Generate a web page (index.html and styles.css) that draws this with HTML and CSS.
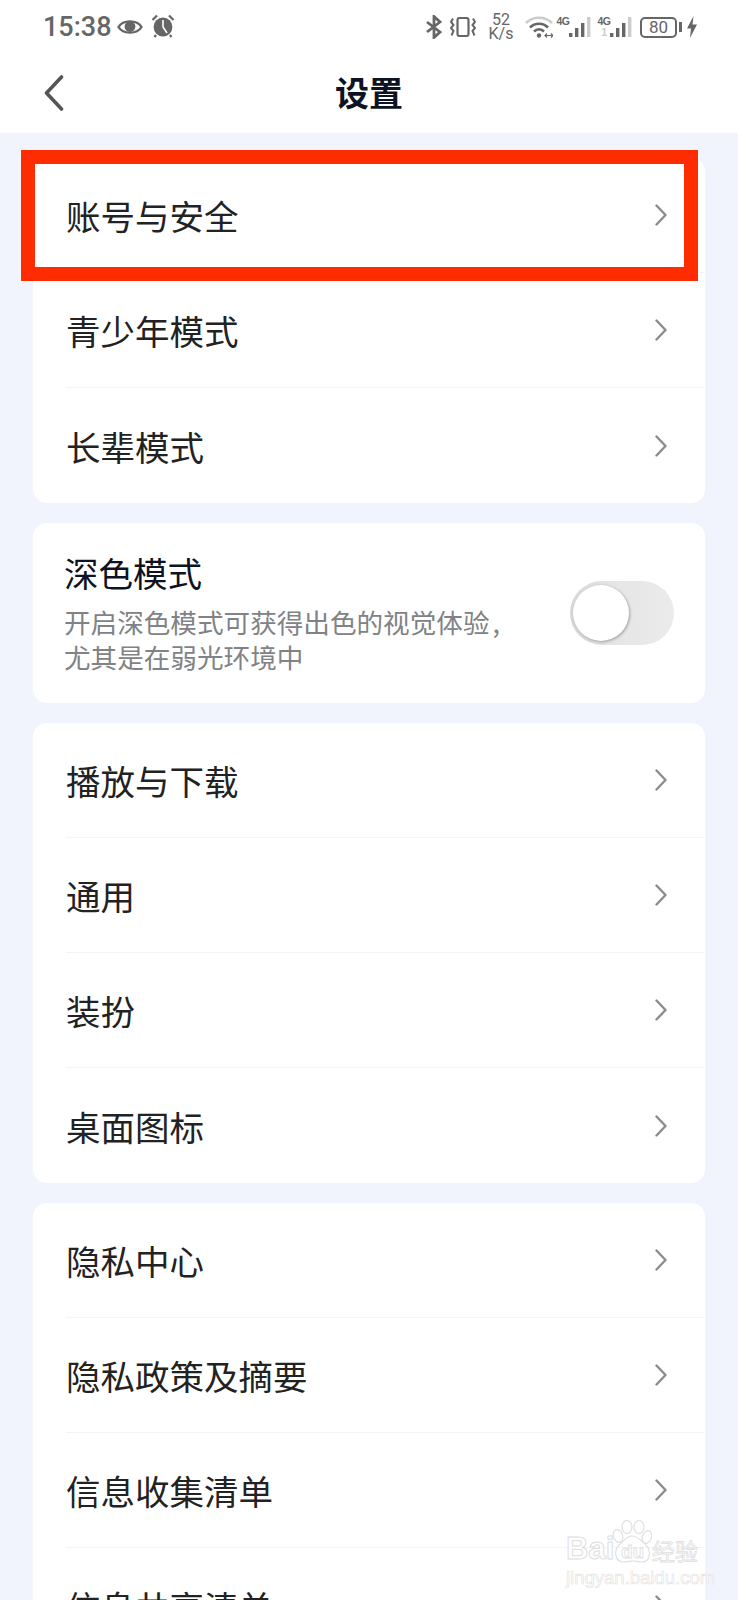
FILE: index.html
```html
<!DOCTYPE html>
<html lang="zh-CN">
<head>
    <meta charset="UTF-8">
    <meta name="viewport" content="width=device-width, initial-scale=1.0">
    <title>设置</title>
    <link rel="stylesheet" href="styles.css">
</head>
<body>
    <svg class="defs" width="0" height="0">
        <symbol id="chevron" viewBox="0 0 12 22">
            <path d="M1.5 1.5 L10.5 11 L1.5 20.5" fill="none" stroke="#8c8c8c" stroke-width="2.4" stroke-linecap="round" stroke-linejoin="round"/>
        </symbol>
        <symbol id="signal" viewBox="0 0 22 22">
            <rect x="0" y="17" width="3.4" height="4" fill="#666"/>
            <rect x="6" y="12" width="3.4" height="9" fill="#666"/>
            <rect x="12" y="7" width="3.4" height="14" fill="#666"/>
            <rect x="18" y="1" width="3.4" height="20" fill="#ccc"/>
        </symbol>
    </svg>

    <div class="status-bar">
        <span class="clock">15:38</span>
        <svg class="icon-eye" viewBox="0 0 26 18">
            <path d="M1.5 9 C6 1.5 20 1.5 24.5 9 C20 16.5 6 16.5 1.5 9 Z" fill="none" stroke="#666" stroke-width="2.4"/>
            <circle cx="13" cy="8.5" r="5.4" fill="#666"/>
        </svg>
        <svg class="icon-alarm" viewBox="0 0 24 24">
            <circle cx="12" cy="13" r="9.4" fill="#666"/>
            <path d="M12 6 V13 L16 19" fill="none" stroke="#fff" stroke-width="1.6"/>
            <path d="M1.5 6 L6 1.5 M22.5 6 L18 1.5 M5 21 L3.5 23 M19 21 L20.5 23" stroke="#666" stroke-width="2.2"/>
        </svg>
        <div class="status-right">
            <svg class="icon-bt" viewBox="0 0 17 24">
                <path d="M1 7 L14 17 L8 22.5 V1.5 L14 7 L1 17" fill="none" stroke="#666" stroke-width="2.8"/>
            </svg>
            <svg class="icon-vibrate" viewBox="0 0 26 20">
                <rect x="7.5" y="1" width="11" height="18" rx="2" fill="none" stroke="#666" stroke-width="2.2"/>
                <path d="M3 1.5 L1 5 L3.5 8 L1 11 L3.5 14 L1.5 18.5 M23 1.5 L25 5 L22.5 8 L25 11 L22.5 14 L24.5 18.5" fill="none" stroke="#666" stroke-width="2"/>
            </svg>
            <div class="speed"><span>52</span><span>K/s</span></div>
            <svg class="icon-wifi" viewBox="0 0 28 22">
                <path d="M1 7 C8 0 20 0 27 7" fill="none" stroke="#ccc" stroke-width="2.6"/>
                <path d="M5 11.5 C10 6.5 18 6.5 23 11.5" fill="none" stroke="#666" stroke-width="2.6"/>
                <path d="M9 15.5 C12 12.5 16 12.5 19 15.5" fill="none" stroke="#666" stroke-width="2.6"/>
                <circle cx="14" cy="19.5" r="2.2" fill="#666"/>
                <path d="M20 19.5 H28 M22 17.5 L20 19.5 L22 21.5 M26 17.5 L28 19.5 L26 21.5" fill="none" stroke="#666" stroke-width="1.2"/>
            </svg>
            <div class="net">
                <div class="net-label"><span>4G</span></div>
                <svg class="icon-signal"><use href="#signal"/></svg>
            </div>
            <div class="net">
                <div class="net-label"><span>4G</span><span class="net-sub">1</span></div>
                <svg class="icon-signal"><use href="#signal"/></svg>
            </div>
            <div class="battery"><span>80</span></div>
            <span class="battery-nub"></span>
            <svg class="icon-bolt" viewBox="0 0 10 22">
                <path d="M6.5 0 L0 12.5 H4 L3 22 L10 8.5 H5.5 Z" fill="#666"/>
            </svg>
        </div>
    </div>

    <header class="nav-bar">
        <svg class="back" viewBox="0 0 20 36">
            <path d="M17.5 2 L2.5 18 L17.5 34" fill="none" stroke="#555" stroke-width="3.6" stroke-linecap="round" stroke-linejoin="round"/>
        </svg>
        <h1>设置</h1>
    </header>

    <main class="content">
        <section class="card">
            <div class="row"><span>账号与安全</span><svg class="chevron"><use href="#chevron"/></svg></div>
            <div class="row"><span>青少年模式</span><svg class="chevron"><use href="#chevron"/></svg></div>
            <div class="row"><span>长辈模式</span><svg class="chevron"><use href="#chevron"/></svg></div>
        </section>

        <section class="card dark-mode">
            <div class="dark-text">
                <h2>深色模式</h2>
                <p>开启深色模式可获得出色的视觉体验<span class="comma">,</span><br>尤其是在弱光环境中</p>
            </div>
            <div class="toggle"><span class="knob"></span></div>
        </section>

        <section class="card">
            <div class="row"><span>播放与下载</span><svg class="chevron"><use href="#chevron"/></svg></div>
            <div class="row"><span>通用</span><svg class="chevron"><use href="#chevron"/></svg></div>
            <div class="row"><span>装扮</span><svg class="chevron"><use href="#chevron"/></svg></div>
            <div class="row"><span>桌面图标</span><svg class="chevron"><use href="#chevron"/></svg></div>
        </section>

        <section class="card">
            <div class="row"><span>隐私中心</span><svg class="chevron"><use href="#chevron"/></svg></div>
            <div class="row"><span>隐私政策及摘要</span><svg class="chevron"><use href="#chevron"/></svg></div>
            <div class="row"><span>信息收集清单</span><svg class="chevron"><use href="#chevron"/></svg></div>
            <div class="row"><span>信息共享清单</span><svg class="chevron"><use href="#chevron"/></svg></div>
        </section>
    </main>

    <!-- annotation drawn on top of the screenshot -->
    <div class="highlight"></div>

    <div class="watermark">
        <div class="wm-line">
            <span class="wm-bai">Bai</span>
            <div class="wm-paw">
                <svg viewBox="0 0 40 44">
                    <g fill="none" stroke="#e0e0e0" stroke-width="1.2">
                        <ellipse cx="6" cy="16" rx="4.6" ry="6.5" transform="rotate(-20 6 16)"/>
                        <ellipse cx="15" cy="7" rx="5" ry="6.5"/>
                        <ellipse cx="27" cy="7" rx="5" ry="6.5"/>
                        <ellipse cx="35" cy="17" rx="4.6" ry="6.5" transform="rotate(20 35 17)"/>
                        <path d="M20 16 C14 16 12 21 7 25 C2 30 2 42 12 42 C16 42 18 41 21 41 C24 41 26 42 30 42 C39 42 39 30 34 25 C29 21 26 16 20 16 Z"/>
                    </g>
                </svg>
                <span class="wm-du">du</span>
            </div>
            <span class="wm-jy">经验</span>
        </div>
        <div class="wm-url">jingyan.baidu.com</div>
    </div>
</body>
</html>
```

FILE: styles.css
```css
html, body {
    margin: 0;
    padding: 0;
}

body {
    position: relative;
    width: 738px;
    height: 1600px;
    overflow: hidden;
    background: #f1f4fc;
    font-family: "Noto Sans CJK SC", "Noto Sans", sans-serif;
    color: #222;
}

.defs {
    position: absolute;
}

.status-bar {
    display: flex;
    align-items: center;
    height: 54px;
    padding: 0 41px 0 43px;
    background: #fff;
    color: #666;
}

.clock {
    font-family: Roboto, sans-serif;
    font-size: 27px;
    font-weight: 500;
}

.icon-eye {
    width: 26px;
    height: 18px;
    margin-left: 5px;
}

.icon-alarm {
    width: 24px;
    height: 24px;
    margin-left: 8px;
    margin-top: -2px;
}

.status-right {
    display: flex;
    align-items: center;
    margin-left: auto;
}

.icon-bt {
    width: 17px;
    height: 24px;
}

.icon-vibrate {
    width: 26px;
    height: 20px;
    margin-left: 7px;
}

.speed {
    display: flex;
    flex-direction: column;
    align-items: center;
    width: 26px;
    margin-left: 12px;
    font-family: Roboto, sans-serif;
    font-size: 16px;
    line-height: 14px;
}

.icon-wifi {
    width: 28px;
    height: 22px;
    margin-left: 11px;
}

.net {
    display: flex;
    align-items: flex-end;
    width: 34px;
    margin-left: 4px;
}

.net + .net {
    margin-left: 7px;
}

.net-label {
    display: flex;
    flex-direction: column;
    align-items: center;
    width: 12px;
    height: 22px;
    font-family: "Liberation Sans", sans-serif;
    font-size: 10.5px;
    font-weight: 700;
    line-height: 11px;
    letter-spacing: -0.5px;
}

.net-sub {
    color: #ccc;
}

.icon-signal {
    width: 22px;
    height: 22px;
}

.battery {
    box-sizing: border-box;
    display: flex;
    align-items: center;
    justify-content: center;
    width: 37px;
    height: 21px;
    margin-left: 8px;
    border: 2px solid #666;
    border-radius: 5px;
    font-family: Roboto, sans-serif;
    font-size: 17px;
}

.battery-nub {
    width: 3px;
    height: 10px;
    margin-left: 2px;
    background: #666;
}

.icon-bolt {
    width: 10px;
    height: 22px;
    margin-left: 5px;
}

.nav-bar {
    position: relative;
    display: flex;
    align-items: center;
    justify-content: center;
    box-sizing: border-box;
    height: 79px;
    padding-bottom: 4px;
    background: #fff;
}

.nav-bar h1 {
    margin: 0;
    font-size: 34px;
    font-weight: 700;
    color: #0d1322;
}

.back {
    position: absolute;
    left: 44px;
    top: 21px;
    width: 20px;
    height: 36px;
}

.content {
    display: flex;
    flex-direction: column;
    gap: 20px;
    padding: 25px 33px 0;
}

.card {
    flex: none;
    background: #fff;
    border-radius: 14px;
}

.row {
    box-sizing: border-box;
    display: flex;
    align-items: center;
    justify-content: space-between;
    height: 115px;
    margin-left: 33px;
    padding-right: 38px;
    border-bottom: 1px solid #f4f4f6;
    font-size: 34.5px;
}

.row:last-child {
    border-bottom: none;
}

.chevron {
    width: 12px;
    height: 22px;
}

.dark-mode {
    display: flex;
    align-items: center;
    justify-content: space-between;
    height: 180px;
    padding: 0 31px;
    box-sizing: border-box;
}

.dark-text {
    align-self: flex-start;
    padding-top: 25px;
}

.dark-text h2 {
    margin: 0;
    font-size: 34.5px;
    font-weight: 400;
    line-height: 48px;
    color: #0d1322;
}

.dark-text p {
    margin: 8px 0 0;
    font-size: 26.6px;
    line-height: 35px;
    color: #808285;
}

.comma {
    margin-left: 3px;
}

.toggle {
    position: relative;
    width: 104px;
    height: 64px;
    border-radius: 32px;
    background: linear-gradient(90deg, #d8d8d8, #e6e6e6 45%, #ebebeb);
}

.knob {
    position: absolute;
    left: 3px;
    top: 4px;
    width: 56px;
    height: 56px;
    border-radius: 50%;
    background: #fff;
    box-shadow: 1px 1px 3px rgba(0, 0, 0, 0.3);
}

.highlight {
    position: absolute;
    left: 21px;
    top: 150px;
    box-sizing: border-box;
    width: 677px;
    height: 131px;
    border: 14px solid #fe2c00;
}

.watermark {
    position: absolute;
    left: 566px;
    top: 1520px;
    width: 134px;
    color: #fff;
}

.wm-line {
    display: flex;
    align-items: flex-end;
    height: 44px;
}

.wm-bai {
    width: 46px;
    font-family: "Liberation Sans", sans-serif;
    font-size: 31px;
    font-weight: 700;
    line-height: 30px;
    -webkit-text-stroke: 1px #dedede;
}

.wm-paw {
    position: relative;
    width: 40px;
    height: 44px;
}

.wm-paw svg {
    display: block;
    width: 40px;
    height: 44px;
}

.wm-du {
    position: absolute;
    left: 9px;
    bottom: 0;
    font-family: "Liberation Sans", sans-serif;
    font-size: 19px;
    font-weight: 700;
    line-height: 24px;
    color: #fff;
    -webkit-text-stroke: 0.8px #dedede;
}

.wm-jy {
    margin-left: 0;
    font-size: 23px;
    line-height: 28px;
    white-space: nowrap;
    -webkit-text-stroke: 0.8px #dedede;
}

.wm-url {
    margin-top: 4px;
    font-family: "Liberation Sans", sans-serif;
    font-size: 18.5px;
    line-height: 20px;
    white-space: nowrap;
    -webkit-text-stroke: 0.6px #e2e2e2;
}
```
